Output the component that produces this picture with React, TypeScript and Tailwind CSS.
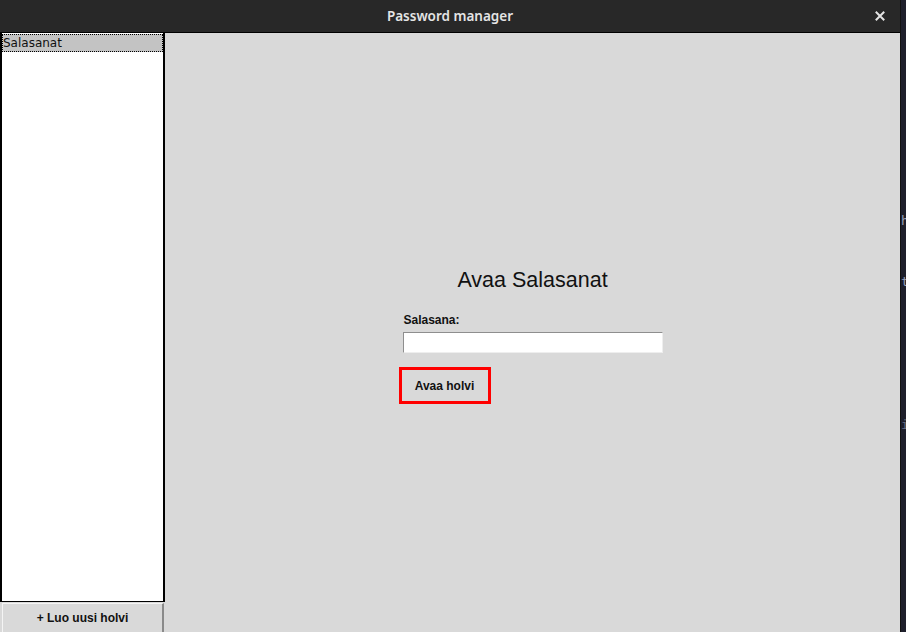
export default function App() {
  return (
    <div className="w-[906px] h-[632px] flex bg-[#1e1f2b] overflow-hidden">
      {/* Window */}
      <div className="w-[901px] h-full flex flex-col border-r border-[#111]">
        {/* Title bar */}
        <div className="h-[33px] shrink-0 bg-[#282828] border-b border-black flex items-center relative">
          <div className="flex-1 text-center text-[13.5px] font-semibold text-[#e4e4e4] font-['Noto_Sans',sans-serif]">
            Password manager
          </div>
          <div className="absolute right-[15px] top-[11px]">
            <svg width="10" height="10" viewBox="0 0 10 10">
              <path d="M1.5 1.5 L8.5 8.5 M8.5 1.5 L1.5 8.5" stroke="#e4e4e4" strokeWidth="2" strokeLinecap="square" />
            </svg>
          </div>
        </div>

        {/* Body */}
        <div className="flex-1 flex bg-[#d9d9d9] min-h-0">
          {/* Left column */}
          <div className="w-[165px] shrink-0 flex flex-col">
            <div className="h-[569px] bg-white border-l-2 border-r-2 border-b border-black pt-[1px]">
              <div className="h-[18px] bg-[#c3c3c3] border border-dotted border-black flex items-center text-[12px] text-[#111] font-['DejaVu_Sans',sans-serif]">
                Salasanat
              </div>
            </div>
            <div className="mt-[1px] ml-[2px] mr-[1px] h-[29px] bg-[#d9d9d9] border-t border-l border-t-[#f4f4f4] border-l-[#f4f4f4] border-r-2 border-r-[#8a8a8a] flex items-center justify-center text-[12px] font-bold text-[#111] font-['Liberation_Sans',sans-serif]">
              + Luo uusi holvi
            </div>
          </div>

          {/* Main area */}
          <div className="flex-1 flex justify-center pt-[235px]">
            <div className="w-[268px] flex flex-col font-['Liberation_Sans',sans-serif] text-[#111]">
              <h1 className="text-center text-[21.5px] leading-[24px]">Avaa Salasanat</h1>
              <div className="mt-[21px] pl-[5px] text-[12px] font-bold leading-[14px]">Salasana:</div>
              <div className="mt-[5px] ml-[4px] w-[260px] h-[21px] bg-white border-t border-l border-t-[#8e8e8e] border-l-[#8e8e8e] border-b border-r border-b-[#eeeeee] border-r-[#eeeeee]" />
              <div className="mt-[14px] w-[92px] h-[37px] border-[3px] border-[#ff0000] bg-[#d9d9d9] flex items-center justify-center text-[12px] font-bold">
                Avaa holvi
              </div>
            </div>
          </div>
        </div>
      </div>

      {/* Background strip to the right of the window */}
      <div className="flex-1 flex flex-col text-[13px] leading-[14px] text-[#9aa0b8] font-['DejaVu_Sans_Mono',monospace] overflow-hidden">
        <span className="mt-[214px]">h</span>
        <span className="mt-[47px]">t</span>
        <span className="mt-[129px] text-[#6a7088]">i</span>
      </div>
    </div>
  );
}
